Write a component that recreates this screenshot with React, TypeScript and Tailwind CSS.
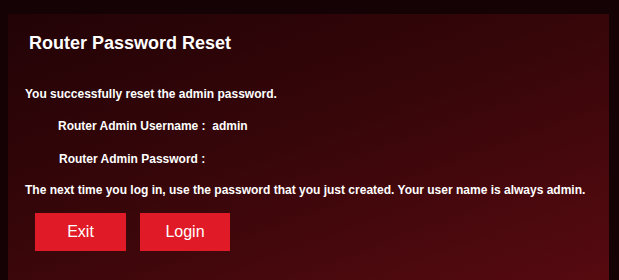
export default function App() {
  return (
    <div className="h-[280px] w-[619px] overflow-hidden bg-[#140204] pl-[8px] pr-[10px] pt-[14px] font-['Liberation_Sans',Arial,sans-serif] text-white">
      <div className="h-full bg-[linear-gradient(160deg,#220306_0%,#360609_45%,#560a10_100%)]">
        <h1 className="pl-[21px] pt-[17px] text-[18px] font-bold leading-[24px]">Router Password Reset</h1>

        <p className="mt-[31px] pl-[17px] text-[12px] font-bold leading-[16px]">
          You successfully reset the admin password.
        </p>

        <div className="mt-[16px] pl-[50px] text-[12px] font-bold leading-[16px]">
          Router Admin Username :&nbsp; admin
        </div>
        <div className="mt-[17px] pl-[51px] text-[12px] font-bold leading-[16px]">Router Admin Password :</div>

        <p className="mt-[15px] pl-[17px] text-[12px] font-bold leading-[16px]">
          The next time you log in, use the password that you just created. Your user name is always admin.
        </p>

        <div className="mt-[15px] flex gap-[14px] pl-[27px]">
          <button className="h-[38px] w-[91px] bg-[#e01a26] text-[16px] text-white">Exit</button>
          <button className="h-[38px] w-[90px] bg-[#e01a26] text-[16px] text-white">Login</button>
        </div>
      </div>
    </div>
  )
}
